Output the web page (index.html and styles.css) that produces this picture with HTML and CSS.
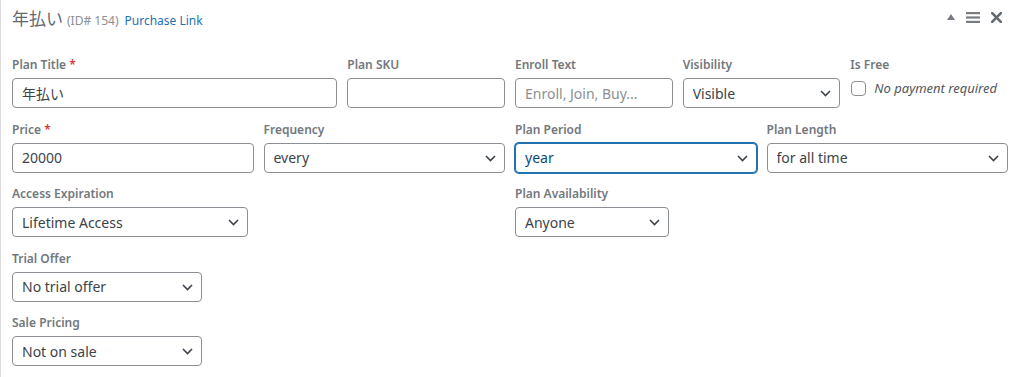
FILE: index.html
```html
<!DOCTYPE html>
<html lang="ja">
<head>
<meta charset="utf-8">
<title>Plan</title>
<link rel="stylesheet" href="styles.css">
</head>
<body>
<div class="panel">
  <div class="panel-head">
    <div class="head-title">
      <span class="plan-name">年払い</span>
      <span class="plan-id">(ID# 154)</span>
      <a class="plan-link" href="#">Purchase Link</a>
    </div>
    <div class="head-tools">
      <svg class="tool tri" width="8" height="6" viewBox="0 0 8 6"><path d="M4 0 L8 6 L0 6 Z" fill="#787c82"/></svg>
      <svg class="tool menu" width="14" height="11" viewBox="0 0 14 11"><rect x="0" y="0" width="14" height="2.2" fill="#787c82"/><rect x="0" y="4.4" width="14" height="2.2" fill="#787c82"/><rect x="0" y="8.8" width="14" height="2.2" fill="#787c82"/></svg>
      <svg class="tool close" width="11" height="11" viewBox="0 0 11 11"><path d="M1.2 1.2 L9.8 9.8 M9.8 1.2 L1.2 9.8" stroke="#646970" stroke-width="2.6" stroke-linecap="round"/></svg>
    </div>
  </div>
  <div class="panel-body">
    <div class="field s4">
      <label class="lbl">Plan Title <span class="req">*</span></label>
      <input class="ctl" type="text" value="年払い">
    </div>
    <div class="field s2">
      <label class="lbl">Plan SKU</label>
      <input class="ctl" type="text" value="">
    </div>
    <div class="field s2">
      <label class="lbl">Enroll Text</label>
      <input class="ctl" type="text" placeholder="Enroll, Join, Buy...">
    </div>
    <div class="field s2">
      <label class="lbl">Visibility</label>
      <div class="sel"><select class="ctl"><option>Visible</option></select><svg class="chev" width="11" height="7" viewBox="0 0 11 7"><path d="M1 1 L5.5 5.5 L10 1" fill="none" stroke="#3c434a" stroke-width="1.6"/></svg></div>
    </div>
    <div class="field s2">
      <label class="lbl">Is Free</label>
      <div class="check-row"><span class="box"></span><em class="check-text">No payment required</em></div>
    </div>

    <div class="field s3">
      <label class="lbl">Price <span class="req">*</span></label>
      <input class="ctl" type="text" value="20000">
    </div>
    <div class="field s3">
      <label class="lbl">Frequency</label>
      <div class="sel"><select class="ctl"><option>every</option></select><svg class="chev" width="11" height="7" viewBox="0 0 11 7"><path d="M1 1 L5.5 5.5 L10 1" fill="none" stroke="#3c434a" stroke-width="1.6"/></svg></div>
    </div>
    <div class="field s3">
      <label class="lbl">Plan Period</label>
      <div class="sel"><select class="ctl focus"><option>year</option></select><svg class="chev" width="11" height="7" viewBox="0 0 11 7"><path d="M1 1 L5.5 5.5 L10 1" fill="none" stroke="#3c434a" stroke-width="1.6"/></svg></div>
    </div>
    <div class="field s3">
      <label class="lbl">Plan Length</label>
      <div class="sel"><select class="ctl"><option>for all time</option></select><svg class="chev" width="11" height="7" viewBox="0 0 11 7"><path d="M1 1 L5.5 5.5 L10 1" fill="none" stroke="#3c434a" stroke-width="1.6"/></svg></div>
    </div>

    <div class="field s6">
      <label class="lbl">Access Expiration</label>
      <div class="sel w-access"><select class="ctl"><option>Lifetime Access</option></select><svg class="chev" width="11" height="7" viewBox="0 0 11 7"><path d="M1 1 L5.5 5.5 L10 1" fill="none" stroke="#3c434a" stroke-width="1.6"/></svg></div>
    </div>
    <div class="field s6">
      <label class="lbl">Plan Availability</label>
      <div class="sel w-avail"><select class="ctl"><option>Anyone</option></select><svg class="chev" width="11" height="7" viewBox="0 0 11 7"><path d="M1 1 L5.5 5.5 L10 1" fill="none" stroke="#3c434a" stroke-width="1.6"/></svg></div>
    </div>

    <div class="field s12">
      <label class="lbl">Trial Offer</label>
      <div class="sel w-small"><select class="ctl"><option>No trial offer</option></select><svg class="chev" width="11" height="7" viewBox="0 0 11 7"><path d="M1 1 L5.5 5.5 L10 1" fill="none" stroke="#3c434a" stroke-width="1.6"/></svg></div>
    </div>

    <div class="field s12">
      <label class="lbl">Sale Pricing</label>
      <div class="sel w-small"><select class="ctl"><option>Not on sale</option></select><svg class="chev" width="11" height="7" viewBox="0 0 11 7"><path d="M1 1 L5.5 5.5 L10 1" fill="none" stroke="#3c434a" stroke-width="1.6"/></svg></div>
    </div>
  </div>
</div>
</body>
</html>
```

FILE: styles.css
```css
* { box-sizing: border-box; }
html, body { margin: 0; padding: 0; background: #fff; }
body {
  font-family: "Noto Sans", "Noto Sans CJK JP", sans-serif;
  color: #3c434a;
}
.panel {
  width: 1024px;
  height: 377px;
  border-left: 1px solid #dcdcde;
  overflow: hidden;
}
.panel-head {
  display: flex;
  align-items: center;
  justify-content: space-between;
  height: 34px;
  padding: 0 22px 0 11px;
}
.head-title {
  display: flex;
  align-items: baseline;
  gap: 4px;
}
.plan-name {
  font-size: 17px;
  color: #646970;
}
.plan-id {
  font-size: 12px;
  color: #8c8f94;
}
.plan-link {
  font-size: 12px;
  color: #2271b1;
  text-decoration: none;
  margin-left: 2px;
}
.head-tools {
  display: flex;
  align-items: center;
  gap: 11px;
}
.panel-body {
  display: grid;
  grid-template-columns: repeat(12, 1fr);
  column-gap: 10px;
  row-gap: 12.6px;
  padding: 22px 16px 0 11px;
}
.field { display: flex; flex-direction: column; align-items: flex-start; min-width: 0; }
.s2 { grid-column: span 2; }
.s3 { grid-column: span 3; }
.s4 { grid-column: span 4; }
.s6 { grid-column: span 6; }
.s12 { grid-column: span 12; }
.lbl {
  font-size: 12px;
  font-weight: 600;
  line-height: 18px;
  color: #72777c;
  margin-bottom: 4px;
}
.req { color: #d63638; }
.ctl {
  width: 100%;
  height: 30px;
  border: 1px solid #8c8f94;
  border-radius: 4px;
  background: #fff;
  padding: 0 9px;
  font-family: inherit;
  font-size: 14px;
  color: #3c434a;
  outline: none;
  margin: 0;
}
.ctl::placeholder { color: #8c8f94; }
.sel { position: relative; width: 100%; }
select.ctl {
  appearance: none;
  -webkit-appearance: none;
  padding-right: 28px;
}
.chev {
  position: absolute;
  right: 9px;
  top: 12px;
  pointer-events: none;
}
.focus {
  border-color: #2271b1;
  box-shadow: 0 0 0 1px #2271b1;
  color: #0a4b78;
}
.w-access { width: 236px; }
.w-avail { width: 154px; }
.w-small { width: 190px; }
.check-row {
  display: flex;
  align-items: center;
  gap: 8px;
  height: 22px;
  margin-top: -1px;
}
.box {
  width: 15px;
  height: 15px;
  border: 1px solid #8c8f94;
  border-radius: 4px;
  margin-left: 1px;
}
.check-text {
  font-size: 13px;
  color: #50575e;
  font-style: italic;
}
```
